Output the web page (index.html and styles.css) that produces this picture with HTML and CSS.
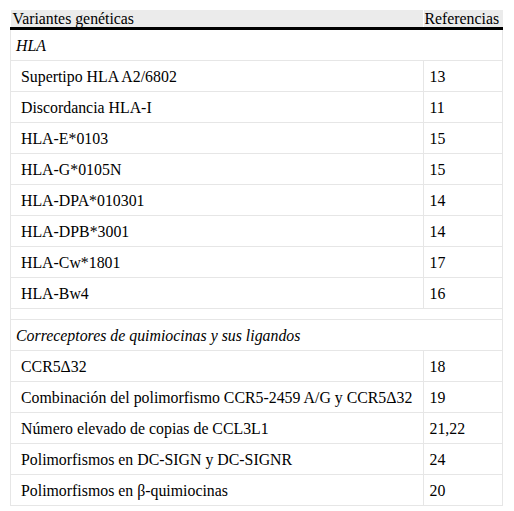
FILE: index.html
```html
<!DOCTYPE html>
<html lang="es">
<head>
<meta charset="utf-8">
<link rel="stylesheet" href="styles.css">
</head>
<body>
<table class="tbl">
  <thead>
    <tr><th class="c1">Variantes genéticas</th><th class="c2">Referencias</th></tr>
  </thead>
  <tbody>
    <tr class="grp"><td colspan="2"><i>HLA</i></td></tr>
    <tr><td class="c1">Supertipo HLA A2/6802</td><td class="c2">13</td></tr>
    <tr><td class="c1">Discordancia HLA-I</td><td class="c2">11</td></tr>
    <tr><td class="c1">HLA-E*0103</td><td class="c2">15</td></tr>
    <tr><td class="c1">HLA-G*0105N</td><td class="c2">15</td></tr>
    <tr><td class="c1">HLA-DPA*010301</td><td class="c2">14</td></tr>
    <tr><td class="c1">HLA-DPB*3001</td><td class="c2">14</td></tr>
    <tr><td class="c1">HLA-Cw*1801</td><td class="c2">17</td></tr>
    <tr><td class="c1">HLA-Bw4</td><td class="c2">16</td></tr>
    <tr class="spacer"><td colspan="2"></td></tr>
    <tr class="grp"><td colspan="2"><i>Correceptores de quimiocinas y sus ligandos</i></td></tr>
    <tr><td class="c1">CCR5Δ32</td><td class="c2">18</td></tr>
    <tr><td class="c1">Combinación del polimorfismo CCR5-2459 A/G y CCR5Δ32</td><td class="c2">19</td></tr>
    <tr><td class="c1">Número elevado de copias de CCL3L1</td><td class="c2">21,22</td></tr>
    <tr><td class="c1">Polimorfismos en DC-SIGN y DC-SIGNR</td><td class="c2">24</td></tr>
    <tr><td class="c1">Polimorfismos en β-quimiocinas</td><td class="c2">20</td></tr>
  </tbody>
</table>
</body>
</html>
```

FILE: styles.css
```css
html, body {
  margin: 0;
  padding: 0;
  background: #fff;
}
body {
  font-family: "Liberation Serif", "DejaVu Serif", serif;
  color: #000;
}
.tbl {
  margin: 10px 0 0 10px;
  width: 493px;
  border-collapse: collapse;
  table-layout: fixed;
  font-family: "Liberation Serif", "DejaVu Serif", serif;
}
.tbl th {
  background: #ebebeb;
  font-weight: normal;
  text-align: left;
  font-size: 15.8px;
  line-height: 17px;
  padding: 0 2px;
  border-bottom: 3px solid #000;
  vertical-align: bottom;
}
.tbl th.c1 {
  width: 408px;
  border-right: 1px solid #fff;
}
.tbl th.c2 {
  padding-left: 1px;
}
.tbl td {
  border: 1px solid #e6e6e6;
  height: 29px;
  padding: 1px 0 0;
  font-size: 15.85px;
  vertical-align: middle;
}
.tbl td.c1 {
  padding-left: 10px;
}
.tbl td.c2 {
  padding-left: 6px;
}
.grp td {
  padding-left: 5px;
}
.spacer td {
  height: 9px;
}
```
